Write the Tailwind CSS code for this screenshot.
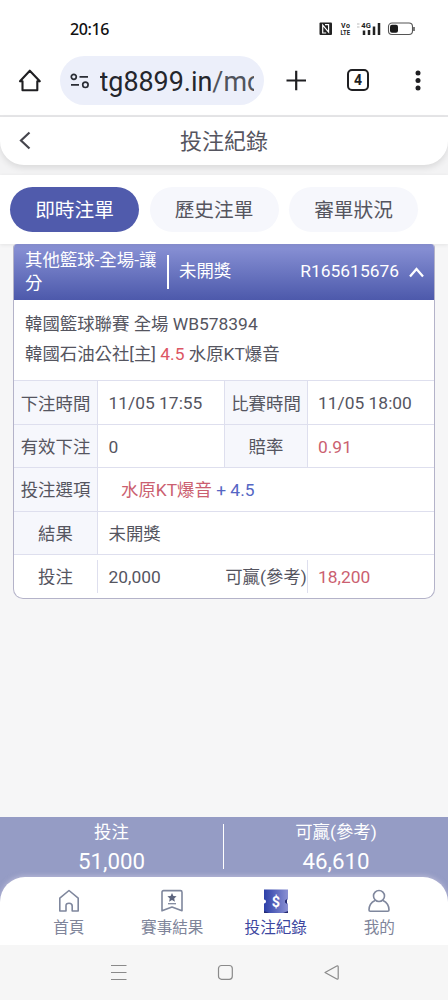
<!DOCTYPE html>
<html lang="zh-Hant">
<head>
<meta charset="utf-8">
<title>投注紀錄</title>
<script src="https://cdn.jsdelivr.net/npm/@tailwindcss/browser@4"></script>
</head>
<body class="w-[448px] h-[1000px] overflow-hidden bg-[#f6f6f7] flex flex-col font-['Roboto','Noto_Sans_CJK_TC',sans-serif] text-[17.4px] text-[#55555f]">

<!-- status bar -->
<div class="h-[56px] shrink-0 bg-white flex items-center pl-[70px] pr-[33px] pt-[2px]">
  <div class="font-['Noto_Sans',sans-serif] font-medium text-[16px] leading-5 text-[#111] w-[249px] tracking-[-0.4px]">20:16</div>
  <svg class="shrink-0" width="96" height="16" viewBox="0 0 96 16">
    <rect x=".5" y="1.5" width="12.5" height="12.5" rx="1" fill="#222"/>
    <path d="M3.700 12.500V4.200L9.600 11.200V3M6 3.700h3.600M3.700 12h3.500" fill="none" stroke="#fff" stroke-width="1.2"/>
    <text x="22" y="7" font-size="7" font-weight="700" fill="#222" font-family="Roboto" textLength="9">Vo</text>
    <text x="21.500" y="14.200" font-size="7.500" font-weight="700" fill="#222" font-family="Roboto" textLength="9.500" lengthAdjust="spacingAndGlyphs">LTE</text>
    <path d="M38 3h2.500M38 6h2.500" stroke="#bbb" stroke-width="1"/>
    <text x="42.300" y="7.400" font-size="8" font-weight="700" fill="#222" font-family="Roboto" textLength="9.500" lengthAdjust="spacingAndGlyphs">4G</text>
    <path d="M45 9.500v4.500M50 9v5M55 5.500v8.500M60 2v12" stroke="#222" stroke-width="2.500"/>
    <rect x="69.500" y="2" width="24" height="11.500" rx="3.500" fill="none" stroke="#555" stroke-width="1.100"/>
    <rect x="71" y="3.800" width="8" height="8" rx="2" fill="#1a1a1a"/>
    <path d="M95 6v4" stroke="#333" stroke-width="1.300"/>
  </svg>
</div>

<!-- browser toolbar -->
<div class="h-[61px] shrink-0 bg-white border-b-2 border-[#e6e6e8] flex items-start">
  <svg class="ml-[17px] mt-[12px] shrink-0" width="26" height="26" viewBox="0 0 26 26" fill="none" stroke="#1f1f22" stroke-width="2.100" stroke-linejoin="round" stroke-linecap="round"><path d="M3 13.300L12.800 2.700L22.800 13.300M3 13.300H5.500V22.300H20.300V13.300H22.800"/></svg>
  <div class="ml-[17px] w-[204px] h-[49px] rounded-full bg-[#eceffa] flex items-center pl-[10px] pr-[10px]">
    <svg class="shrink-0" width="20" height="18" viewBox="0 0 20 18" fill="none" stroke="#2a2d35" stroke-width="1.700"><circle cx="3.800" cy="4.800" r="2.500"/><path d="M9.500 4.800H18M1 12.800H9"/><circle cx="15.400" cy="12.800" r="2.700"/></svg>
    <div class="ml-[9.500px] flex-1 overflow-hidden whitespace-nowrap text-[26.900px] leading-[36px] text-[#24262c] pt-[2px]">tg8899.in<span class="text-[#50545c]">/mo</span></div>
  </div>
  <svg class="ml-[22px] mt-[14px] shrink-0" width="21" height="21" viewBox="0 0 21 21" stroke="#1f1f22" stroke-width="2.200"><path d="M.5 10.500H20M10.200 .8V20.200"/></svg>
  <div class="ml-[40px] mt-[13px] w-[22px] h-[22px] border-2 border-[#1f1f22] rounded-[5px] flex items-center justify-center text-[14px] leading-none font-bold text-[#1f1f22]">4</div>
  <svg class="ml-[46px] mt-[13px] shrink-0" width="8" height="24" viewBox="0 0 8 24" fill="#1f1f22"><circle cx="3" cy="4" r="2.500"/><circle cx="3" cy="11.500" r="2.500"/><circle cx="3" cy="19" r="2.500"/></svg>
</div>

<!-- page title -->
<div class="h-[58px] shrink-0 bg-[#f3f3f4]">
  <div class="h-[48px] bg-white rounded-b-[24px] shadow-[0_3px_6px_rgba(0,0,0,0.1)] grid grid-cols-[1fr_auto_1fr] items-center">
    <svg class="ml-[19px]" width="14" height="20" viewBox="0 0 14 20" fill="none" stroke="#45454d" stroke-width="2.200"><path d="M10.500 1.500L2 9.500L10.500 17.500"/></svg>
    <h1 class="text-[22px] leading-[30px] pt-[2px]">投注紀錄</h1>
  </div>
</div>

<!-- tabs -->
<div class="h-[69px] shrink-0 bg-white flex gap-[10.500px] pl-[10px] pt-[12px] text-[19.700px] shadow-[0_1px_4px_rgba(0,0,0,0.08)] relative">
  <div class="w-[129px] h-[45px] pt-[3px] rounded-full bg-[#505bac] text-white flex items-center justify-center">即時注單</div>
  <div class="w-[129px] h-[45px] pt-[3px] rounded-full bg-[#f6f7fc] flex items-center justify-center">歷史注單</div>
  <div class="w-[129px] h-[45px] pt-[3px] rounded-full bg-[#f6f7fc] flex items-center justify-center">審單狀況</div>
</div>

<!-- bet card -->
<div class="flex-1">
  <div class="ml-[13px] w-[422px] h-[355px] rounded-b-[10px] rounded-t-[4px] border-[1.500px] border-t-0 border-[#b4b3c9] bg-white overflow-hidden flex flex-col">
    <div class="h-[56px] shrink-0 bg-linear-to-b from-[#8b93d6] to-[#4d59ab] text-white flex items-center pl-[11px] pr-[10px]">
      <div class="w-[142px] pr-[8px] leading-[23.500px]">其他籃球-全場-讓分</div>
      <div class="w-[2px] h-[34px] bg-white"></div>
      <div class="ml-[10px] flex-1 pb-px">未開獎</div>
      <div class="pb-px">R165615676</div>
      <svg class="ml-[10px]" width="15" height="12" viewBox="0 0 15 12" fill="none" stroke="#fff" stroke-width="2.300"><path d="M1 10.500L7.500 3L14 10.500"/></svg>
    </div>
    <div class="h-[80px] shrink-0 pl-[11px] pt-[9px] leading-[30px]">
      <div>韓國籃球聯賽 全場 WB578394</div>
      <div>韓國石油公社[主] <span class="text-[#dc5664]">4.5</span> 水原KT爆音</div>
    </div>
    <div class="flex-1 grid grid-cols-[84px_127px_83px_1fr] grid-rows-5">
      <div class="border-t border-r border-[#dedfee] bg-[#f6f7fc] flex items-center justify-center pt-[3px]">下注時間</div>
      <div class="border-t border-r border-[#dedfee] flex items-center pl-[10.500px] pt-[2px]">11/05 17:55</div>
      <div class="border-t border-r border-[#dedfee] bg-[#f6f7fc] flex items-center justify-center pt-[3px]">比賽時間</div>
      <div class="border-t border-[#dedfee] flex items-center pl-[10px] pt-[2px]">11/05 18:00</div>

      <div class="border-t border-r border-[#dedfee] bg-[#f6f7fc] flex items-center justify-center pt-[2px]">有效下注</div>
      <div class="border-t border-r border-[#dedfee] flex items-center pl-[10.500px] pt-[2px]">0</div>
      <div class="border-t border-r border-[#dedfee] bg-[#f6f7fc] flex items-center justify-center pt-[2px]">賠率</div>
      <div class="border-t border-[#dedfee] flex items-center pl-[10px] pt-[2px] text-[#cb5f70]">0.91</div>

      <div class="border-t border-r border-[#dedfee] bg-[#f6f7fc] flex items-center justify-center pt-[2px]">投注選項</div>
      <div class="col-span-3 border-t border-[#dedfee] flex items-center pl-[23px] pt-[2px] whitespace-pre text-[#cb5f70]">水原KT爆音<span class="text-[#5566c4]"> + 4.5</span></div>

      <div class="border-t border-r border-[#dedfee] bg-[#f6f7fc] flex items-center justify-center pt-px">結果</div>
      <div class="col-span-3 border-t border-[#dedfee] flex items-center pl-[10.500px] pt-px">未開獎</div>

      <div class="border-t border-[#dedfee] flex items-center"><div class="h-[33px] w-full border-r border-[#dedfee] flex items-center justify-center">投注</div></div>
      <div class="border-t border-[#dedfee] flex items-center pl-[10.500px]">20,000</div>
      <div class="border-t border-[#dedfee] flex items-center"><div class="h-[33px] w-full border-r border-[#dedfee] flex items-center justify-center whitespace-nowrap">可贏(參考)</div></div>
      <div class="border-t border-[#dedfee] flex items-center pl-[10px] text-[#cb5f70]">18,200</div>
    </div>
  </div>
</div>

<!-- totals and tab bar -->
<div class="h-[128px] shrink-0 bg-[#959cc5] flex flex-col">
  <div class="h-[60px] shrink-0 grid grid-cols-[223px_1px_1fr] text-white text-center pt-px">
    <div><div class="leading-[29px]">投注</div><div class="text-[22.300px] leading-[28px]">51,000</div></div>
    <div class="bg-white h-[45px] mt-[6px]"></div>
    <div><div class="leading-[29px]">可贏(參考)</div><div class="text-[22.300px] leading-[28px]">46,610</div></div>
  </div>
  <nav class="flex-1 bg-white rounded-t-[25px] shadow-[0_-1px_5px_rgba(225,220,235,0.5)] grid grid-cols-4 px-[17px] text-[15.600px] leading-[22px] text-[#80859a]">
    <div class="flex flex-col items-center pt-[12px] gap-[4px]">
      <svg width="24" height="24" viewBox="0 0 24 24" fill="none" stroke="#7f879d" stroke-width="1.600" stroke-linejoin="round"><path d="M2.800 9.200L12 1.500L21.200 9.200V22H15.200V17Q15.200 14.200 12 14.200T9 17V22H2.800Z"/></svg>
      <div>首頁</div>
    </div>
    <div class="flex flex-col items-center pt-[12px] gap-[4px]">
      <svg width="24" height="24" viewBox="0 0 24 24" fill="none" stroke="#7f879d" stroke-width="1.600" stroke-linejoin="round"><path d="M2 3.200Q2 1.600 3.600 1.600H20.400Q22 1.600 22 3.200V21.800L12 18L2 21.800Z"/><path d="M8 14.700H16" stroke-width="1.300"/><path d="M12 4L13.400 7L16.600 7.300L14.200 9.500L14.900 12.700L12 11L9.100 12.700L9.800 9.500L7.400 7.300L10.600 7Z" fill="#5d657e" stroke="none"/></svg>
      <div>賽事結果</div>
    </div>
    <div class="flex flex-col items-center pt-[12px] gap-[4px] text-[#3d479f]">
      <svg width="24" height="24" viewBox="0 0 24 24"><defs><linearGradient id="ticket" x1="0" y1="0" x2="1" y2="0"><stop offset="0" stop-color="#2c3fa8"/><stop offset="1" stop-color="#8b91d3"/></linearGradient></defs><path d="M0 .5H24V10.500A2 2 0 0 0 24 14.500V24H0V14.500A2 2 0 0 0 0 10.500Z" fill="url(#ticket)"/><path d="M0 24V22L5 24ZM24 24V22L19 24ZM21 11.500L23 10V15L21 13.500Z" fill="#252c72"/><text x="12" y="17.600" text-anchor="middle" font-family="Roboto" font-size="14.500" font-weight="700" fill="#fff">$</text></svg>
      <div>投注紀錄</div>
    </div>
    <div class="flex flex-col items-center pt-[12px] gap-[4px]">
      <svg width="24" height="24" viewBox="0 0 24 24" fill="none" stroke="#7f879d" stroke-width="1.600" stroke-linejoin="round"><circle cx="12" cy="7" r="5.500"/><path d="M8 11.500Q2 14.500 2 21Q2 22.200 3.200 22.200H20.800Q22 22.200 22 21Q22 14.500 16 11.500"/></svg>
      <div>我的</div>
    </div>
  </nav>
</div>

<!-- system navigation -->
<div class="h-[55px] shrink-0 bg-[#f6f6f6] flex items-center pl-[110px] gap-[90px]">
  <svg width="17" height="17" viewBox="0 0 17 17" stroke="#8a8a8a" stroke-width="1.200"><path d="M1 1.500H16.500M1 8.500H16.500M1 15.500H16.500"/></svg>
  <svg width="17" height="17" viewBox="0 0 17 17" fill="none" stroke="#8a8a8a" stroke-width="1.200"><rect x="1.500" y="1.500" width="13.800" height="13.800" rx="3"/></svg>
  <svg width="17" height="17" viewBox="0 0 17 17" fill="none" stroke="#8a8a8a" stroke-width="1.200" stroke-linejoin="round"><path d="M1 8.500L12.800 2Q14.200 1.500 14.200 3V14Q14.200 15.500 12.800 15Z"/></svg>
</div>
</body>
</html>
